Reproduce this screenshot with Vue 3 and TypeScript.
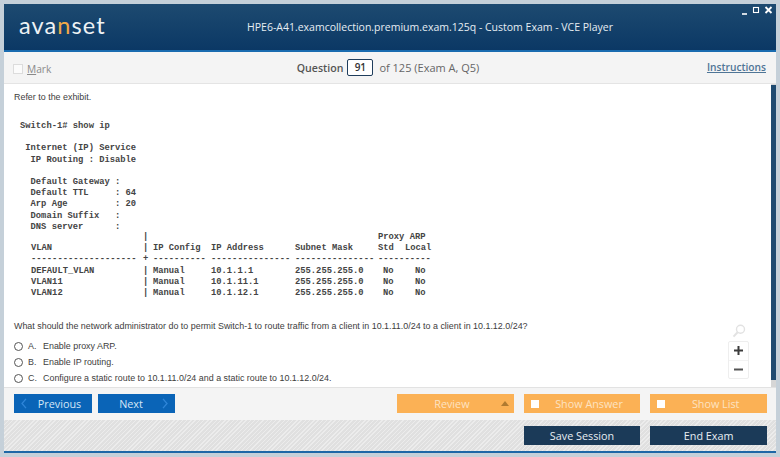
<script setup lang="ts">
interface VlanRow { name: string; config: string; address: string; mask: string }
const vlans: VlanRow[] = [
  { name: 'DEFAULT_VLAN', config: 'Manual', address: '10.1.1.1', mask: '255.255.255.0' },
  { name: 'VLAN11', config: 'Manual', address: '10.1.11.1', mask: '255.255.255.0' },
  { name: 'VLAN12', config: 'Manual', address: '10.1.12.1', mask: '255.255.255.0' },
]
const options = [
  { key: 'A.', text: 'Enable proxy ARP.' },
  { key: 'B.', text: 'Enable IP routing.' },
  { key: 'C.', text: 'Configure a static route to 10.1.11.0/24 and a static route to 10.1.12.0/24.' },
]
const config = `Switch-1# show ip

 Internet (IP) Service
  IP Routing : Disable

  Default Gateway :
  Default TTL     : 64
  Arp Age         : 20
  Domain Suffix   :
  DNS server      :`
</script>

<template>
  <div class="shell">
    <header class="titlebar">
      <div class="logo">ava<span class="logo-n">n</span>set</div>
      <h1 class="title">HPE6-A41.examcollection.premium.exam.125q - Custom Exam - VCE Player</h1>
      <div class="winctl">
        <svg width="32" height="10" viewBox="0 0 32 10">
          <path d="M0 9h5" stroke="#fff" stroke-width="1.6" />
          <rect x="11.5" y="2.5" width="5" height="5" fill="none" stroke="#fff" stroke-width="1.1" />
          <path d="M23.5 2l6 6M29.5 2l-6 6" stroke="#fff" stroke-width="1.8" />
        </svg>
      </div>
    </header>

    <div class="toolbar">
      <label class="mark"><span class="mark-box"></span><span><u>M</u>ark</span></label>
      <div class="counter">
        <b>Question</b>
        <span class="qbox">91</span>
        <span>of 125 (Exam A, Q5)</span>
      </div>
      <a class="instructions">Instructions</a>
    </div>

    <main class="content">
      <div class="scrollarea">
        <p class="refer">Refer to the exhibit.</p>
        <pre class="exhibit">{{ config }}</pre>
        <div class="vtable">
          <span></span><span>|</span><span></span><span></span><span></span><span class="span2">Proxy ARP</span>
          <span>VLAN</span><span>|</span><span>IP Config</span><span>IP Address</span><span>Subnet Mask</span><span>Std</span><span>Local</span>
          <span>--------------------</span><span>+</span><span>----------</span><span>---------------</span><span>---------------</span><span class="span2">----------</span>
          <template v-for="v in vlans" :key="v.name">
            <span>{{ v.name }}</span><span>|</span><span>{{ v.config }}</span><span>{{ v.address }}</span><span>{{ v.mask }}</span><span class="no">No</span><span class="no2">No</span>
          </template>
        </div>
        <p class="question">What should the network administrator do to permit Switch-1 to route traffic from a client in 10.1.11.0/24 to a client in 10.1.12.0/24?</p>
        <ul class="options">
          <li v-for="o in options" :key="o.key">
            <span class="radio"></span><span class="okey">{{ o.key }}</span><span>{{ o.text }}</span>
          </li>
        </ul>
      </div>
      <div class="scrollbar"><div class="thumb"></div></div>

      <div class="zoomer">
        <svg class="lens" width="14" height="14" viewBox="0 0 14 14">
          <circle cx="8.5" cy="5.2" r="4" fill="none" stroke="#e2e2e2" stroke-width="1.4" />
          <path d="M5.6 8.2L1.5 12.6" stroke="#e2e2e2" stroke-width="2" />
        </svg>
        <div class="zoombox">
          <span class="zbtn">
            <svg width="9" height="9" viewBox="0 0 9 9"><path d="M0 4.5h9M4.5 0v9" stroke="#3c3c3c" stroke-width="2" /></svg>
          </span>
          <span class="zbtn">
            <svg width="9" height="9" viewBox="0 0 9 9"><path d="M0 4.5h9" stroke="#555" stroke-width="2" /></svg>
          </span>
        </div>
      </div>
    </main>

    <div class="navbar">
      <div class="navgroup">
        <button class="btn blue prev">
          <svg class="chev" width="6" height="11" viewBox="0 0 6 11"><path d="M5 .8L1 5.5l4 4.7" fill="none" stroke="#2f86d8" stroke-width="1.3" /></svg>
          Previous
        </button>
        <button class="btn blue next">
          Next
          <svg class="chev" width="6" height="11" viewBox="0 0 6 11"><path d="M1 .8l4 4.7-4 4.7" fill="none" stroke="#2f86d8" stroke-width="1.3" /></svg>
        </button>
      </div>
      <div class="actiongroup">
        <button class="btn orange review">Review<span class="tri"></span></button>
        <button class="btn orange check"><span class="tick"></span>Show Answer</button>
        <button class="btn orange check"><span class="tick"></span>Show List</button>
      </div>
    </div>

    <footer class="footer">
      <button class="btn navy">Save Session</button>
      <button class="btn navy">End Exam</button>
    </footer>
    <div class="baseline"></div>
  </div>
</template>

<style scoped>
.shell {
  width: 780px;
  height: 457px;
  box-sizing: border-box;
  padding: 4px 4px 0;
  background: #c5d0d9;
  display: flex;
  flex-direction: column;
  overflow: hidden;
  font-family: "Liberation Sans", Arial, sans-serif;
}
.titlebar {
  position: relative;
  height: 48px;
  flex: none;
  box-sizing: border-box;
  border-bottom: 2px solid #1a6cb0;
  background: linear-gradient(#1d4a70, #0b3865);
  display: flex;
  align-items: center;
  padding-left: 15px;
}
.logo {
  width: 228px;
  flex: none;
  font-family: Lato, sans-serif;
  font-weight: 400;
  font-size: 23.5px;
  letter-spacing: 1.1px;
  color: #eef2f5;
  line-height: 28px;
  margin-top: -4px;
}
.logo-n { color: #f0a848; }
.title {
  margin: 0;
  font-family: "Open Sans", sans-serif;
  font-weight: 400;
  font-size: 10.5px;
  color: #e6edf3;
  white-space: nowrap;
}
.winctl {
  position: absolute;
  right: 2px;
  top: 1px;
  line-height: 0;
}
.toolbar {
  flex: none;
  height: 32px;
  box-sizing: border-box;
  background: #f4f4f4;
  border-bottom: 1px solid #e4e4e4;
  display: grid;
  grid-template-columns: 1fr auto 1fr;
  align-items: center;
  padding: 0 10px 0 9px;
  font-family: "Open Sans", sans-serif;
  color: #666;
}
.mark {
  display: flex;
  align-items: center;
  gap: 4px;
  font-size: 10.2px;
  color: #8a8a8a;
  margin-top: 2px;
}
.mark-box {
  width: 8px;
  height: 8px;
  background: #fbfbfb;
  border: 1px solid #dcdcdc;
}
.counter {
  display: flex;
  align-items: center;
  gap: 4px;
  font-size: 11px;
  color: #666;
  margin-left: -3px;
}
.counter b { font-weight: 600; color: #555; font-size: 10.6px; }
.counter span:last-child { margin-left: 2px; }
.qbox {
  width: 24px;
  height: 15px;
  border: 1px solid #1f3d5c;
  border-radius: 2px;
  background: #fff;
  text-align: center;
  font-size: 10px;
  font-weight: 600;
  line-height: 15px;
  color: #333;
}
.instructions {
  justify-self: end;
  font-size: 10.2px;
  font-weight: 600;
  color: #4f7596;
  text-decoration: underline;
  margin-top: -2px;
}
.content {
  position: relative;
  flex: none;
  height: 303px;
  background: #fff;
  display: flex;
  overflow: hidden;
}
.scrollarea {
  flex: 1;
  min-width: 0;
  padding: 8px 0 0 10px;
  overflow: hidden;
  font-size: 8.92px;
  color: #3d3d3d;
}
.refer { margin: 0; line-height: 11px; }
.exhibit {
  margin: 18px 0 0 6px;
  font-family: "Liberation Mono", monospace;
  font-weight: 700;
  font-size: 8.8px;
  line-height: 11.2px;
  color: #444;
}
.vtable {
  margin: -1px 0 0 17px;
  display: grid;
  grid-template-columns: 112px 10px 58px 84px 83px 27px auto;
  justify-content: start;
  font-family: "Liberation Mono", monospace;
  font-weight: 700;
  font-size: 8.8px;
  line-height: 11.2px;
  color: #444;
  white-space: pre;
}
.span2 { grid-column: span 2; }
.no { padding-left: 5px; }
.no2 { padding-left: 10px; }
.question {
  margin: 22px 0 0;
  line-height: 11px;
  white-space: nowrap;
}
.options {
  list-style: none;
  margin: 6px 0 0;
  padding: 0;
}
.options li {
  height: 16px;
  display: flex;
  align-items: center;
}
.radio {
  width: 7px;
  height: 7px;
  border: 1px solid #555;
  border-radius: 50%;
}
.okey { width: 15px; margin-left: 5px; color: #444; }
.scrollbar {
  flex: none;
  width: 5px;
  background: #d6d6d6;
}
.thumb {
  height: 295px;
  margin-top: 1px;
  background: #1f4a70;
}
.zoomer {
  position: absolute;
  left: 724px;
  top: 240px;
  width: 21px;
  display: flex;
  flex-direction: column;
  align-items: center;
}
.lens { margin-bottom: 3px; }
.zoombox {
  width: 21px;
  height: 38px;
  box-sizing: border-box;
  border: 1px solid #eee;
  border-radius: 2px;
  display: flex;
  flex-direction: column;
}
.zbtn {
  flex: 1;
  display: flex;
  align-items: center;
  justify-content: center;
}
.zbtn + .zbtn { border-top: 1px solid #f3f3f3; }
.navbar {
  flex: none;
  height: 33px;
  box-sizing: border-box;
  background: #f4f4f4;
  border-top: 1px solid #e2e2e2;
  padding: 6px 9px 0 10px;
  display: flex;
  justify-content: space-between;
}
.navgroup { display: flex; gap: 6px; }
.actiongroup { display: flex; gap: 10px; }
.btn {
  height: 19px;
  border: 0;
  padding: 0;
  font-family: "Open Sans", sans-serif;
  font-size: 10.8px;
  display: flex;
  align-items: center;
  justify-content: center;
  position: relative;
}
.blue { background: #0a64b7; color: #d5e6f6; }
.prev { width: 78px; padding-left: 13px; }
.next { width: 77px; padding-right: 11px; }
.chev { position: absolute; top: 4px; }
.prev .chev { left: 7px; }
.next .chev { right: 7px; }
.orange { width: 116.67px; background: #fbb155; color: #fde3c2; }
.review { padding-right: 7px; }
.tri {
  position: absolute;
  right: 5px;
  top: 7px;
  width: 0;
  height: 0;
  border: 4px solid transparent;
  border-top: 0;
  border-bottom: 5px solid #b07a30;
}
.check { padding-left: 14px; }
.tick {
  position: absolute;
  left: 7px;
  top: 6px;
  width: 8px;
  height: 8px;
  background: #fff;
}
.footer {
  flex: 1;
  min-height: 0;
  display: flex;
  justify-content: flex-end;
  align-items: flex-start;
  gap: 10px;
  padding: 6px 9px 0 10px;
  background: repeating-linear-gradient(135deg, #ececec 0 1px, #e0e0e0 1px 3px);
}
.navy {
  width: 116.67px;
  height: 19px;
  background: #1b3a58;
  color: #e8eef3;
}
.baseline {
  flex: none;
  height: 2px;
  background: #1e67a6;
  margin-bottom: 4px;
}
</style>
